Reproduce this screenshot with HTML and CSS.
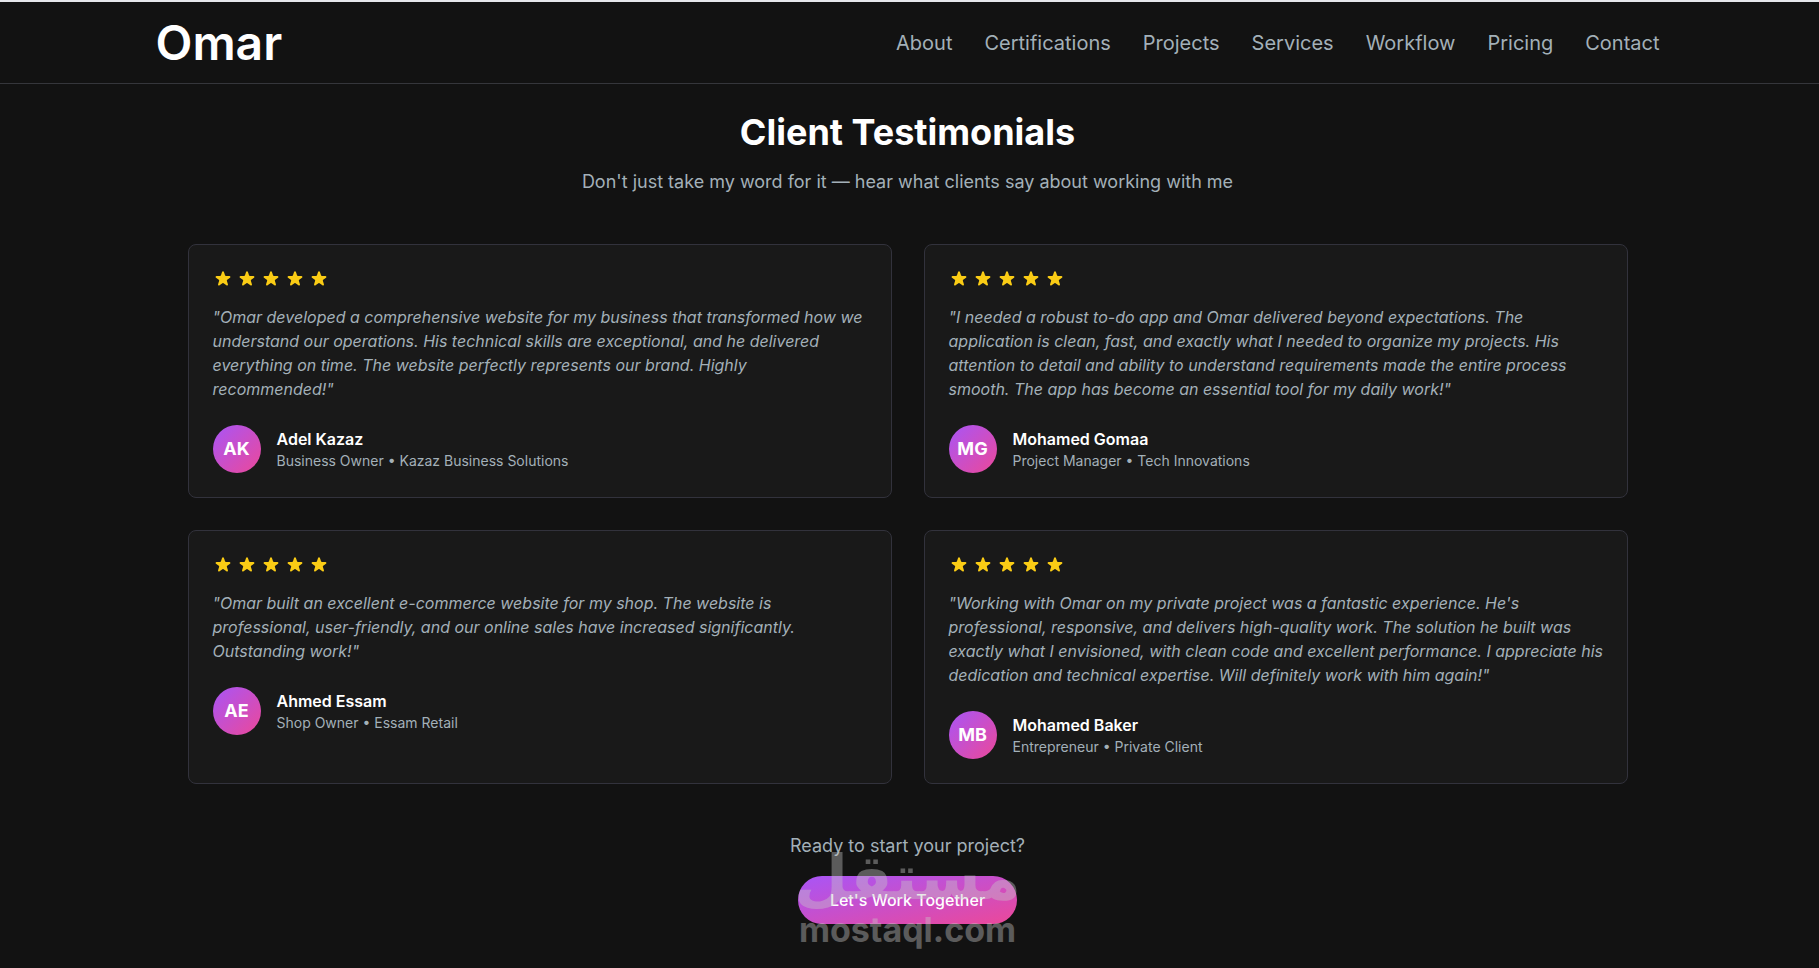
FILE: index.html
```html
<!DOCTYPE html>
<html lang="en">
<head>
<meta charset="utf-8">
<title>Omar</title>
<link rel="stylesheet" href="styles.css">
</head>
<body>
<svg width="0" height="0" class="sprite" aria-hidden="true">
  <symbol id="star" viewBox="0 0 20 20"><path d="M9.049 2.927c.3-.921 1.603-.921 1.902 0l1.07 3.292a1 1 0 00.95.69h3.462c.969 0 1.371 1.24.588 1.81l-2.8 2.034a1 1 0 00-.364 1.118l1.07 3.292c.3.921-.755 1.688-1.54 1.118l-2.8-2.034a1 1 0 00-1.175 0l-2.8 2.034c-.784.57-1.838-.197-1.539-1.118l1.07-3.292a1 1 0 00-.364-1.118L2.98 8.72c-.783-.57-.38-1.81.588-1.81h3.461a1 1 0 00.951-.69l1.07-3.292z"/></symbol>
  <symbol id="rating" viewBox="0 0 120 20">
    <use href="#star" x="0" y="0" width="20" height="20"/>
    <use href="#star" x="24" y="0" width="20" height="20"/>
    <use href="#star" x="48" y="0" width="20" height="20"/>
    <use href="#star" x="72" y="0" width="20" height="20"/>
    <use href="#star" x="96" y="0" width="20" height="20"/>
  </symbol>
</svg>
<header class="header">
  <div class="header-inner">
    <a class="brand" href="#">Omar</a>
    <nav class="nav">
      <a href="#about">About</a>
      <a href="#certifications">Certifications</a>
      <a href="#projects">Projects</a>
      <a href="#services">Services</a>
      <a href="#workflow">Workflow</a>
      <a href="#pricing">Pricing</a>
      <a href="#contact">Contact</a>
    </nav>
  </div>
</header>
<main class="testimonials">
  <h2 class="title">Client Testimonials</h2>
  <p class="subtitle">Don't just take my word for it — hear what clients say about working with me</p>
  <div class="cards">
    <article class="card">
      <svg class="stars" role="img" aria-label="5 stars"><use href="#rating"/></svg>
      <p class="quote">"Omar developed a comprehensive website for my business that transformed how we understand our operations. His technical skills are exceptional, and he delivered everything on time. The website perfectly represents our brand. Highly recommended!"</p>
      <div class="author">
        <div class="avatar">AK</div>
        <div><h3 class="name">Adel Kazaz</h3><p class="role">Business Owner • Kazaz Business Solutions</p></div>
      </div>
    </article>
    <article class="card">
      <svg class="stars" role="img" aria-label="5 stars"><use href="#rating"/></svg>
      <p class="quote">"I needed a robust to-do app and Omar delivered beyond expectations. The application is clean, fast, and exactly what I needed to organize my projects. His attention to detail and ability to understand requirements made the entire process smooth. The app has become an essential tool for my daily work!"</p>
      <div class="author">
        <div class="avatar">MG</div>
        <div><h3 class="name">Mohamed Gomaa</h3><p class="role">Project Manager • Tech Innovations</p></div>
      </div>
    </article>
    <article class="card">
      <svg class="stars" role="img" aria-label="5 stars"><use href="#rating"/></svg>
      <p class="quote">"Omar built an excellent e-commerce website for my shop. The website is professional, user-friendly, and our online sales have increased significantly. Outstanding work!"</p>
      <div class="author">
        <div class="avatar">AE</div>
        <div><h3 class="name">Ahmed Essam</h3><p class="role">Shop Owner • Essam Retail</p></div>
      </div>
    </article>
    <article class="card">
      <svg class="stars" role="img" aria-label="5 stars"><use href="#rating"/></svg>
      <p class="quote">"Working with Omar on my private project was a fantastic experience. He's professional, responsive, and delivers high-quality work. The solution he built was exactly what I envisioned, with clean code and excellent performance. I appreciate his dedication and technical expertise. Will definitely work with him again!"</p>
      <div class="author">
        <div class="avatar">MB</div>
        <div><h3 class="name">Mohamed Baker</h3><p class="role">Entrepreneur • Private Client</p></div>
      </div>
    </article>
  </div>
  <section class="cta">
    <p class="cta-text">Ready to start your project?</p>
    <a class="cta-button" href="#contact">Let's Work Together</a>
    <div class="watermark" aria-hidden="true">
      <span class="watermark-ar" lang="ar" dir="rtl">مستقل</span>
      <span class="watermark-en">mostaql.com</span>
    </div>
  </section>
</main>
</body>
</html>
```
FILE: styles.css
```css
* { box-sizing: border-box; }
body {
  margin: 0;
  padding-right: 4px;
  background: #121212;
  color: #a3b0b8;
  font-family: Inter, "Liberation Sans", sans-serif;
  font-size: 16px;
  line-height: 24px;
}
h2, h3, p { margin: 0; }
a { color: inherit; text-decoration: none; }
.sprite { position: absolute; }
.header {
  margin-right: -4px;
  padding-right: 4px;
  border-top: 2px solid #e5e7eb;
  border-bottom: 1px solid #35363b;
}
.header-inner {
  display: flex;
  align-items: center;
  justify-content: space-between;
  max-width: 1536px;
  margin: 0 auto;
  padding: 16px;
}
.brand {
  color: #fff;
  font-size: 48px;
  font-weight: 600;
  line-height: 49px;
}
.nav { display: flex; gap: 32px; font-size: 20px; line-height: 28px; }
.testimonials {
  max-width: 1472px;
  margin: 0 auto;
  padding: 28px 16px;
}
.title {
  color: #fff;
  font-size: 36px;
  font-weight: 700;
  line-height: 40px;
  text-align: center;
}
.subtitle {
  margin-top: 16px;
  font-size: 18px;
  line-height: 28px;
  text-align: center;
}
.cards {
  display: grid;
  grid-template-columns: 1fr 1fr;
  gap: 32px;
  margin-top: 48px;
}
.card {
  padding: 24px 20px 24px 24px;
  background: #191919;
  border: 1px solid #32323c;
  border-radius: 8px;
}
.stars { display: block; width: 120px; height: 20px; fill: #facc15; }
.quote { margin: 16px 0 24px; font-style: italic; }
.author { display: flex; align-items: center; gap: 16px; }
.avatar {
  display: flex;
  align-items: center;
  justify-content: center;
  width: 48px;
  height: 48px;
  border-radius: 50%;
  background: linear-gradient(to bottom right, #a855f7, #ec4899);
  color: #fff;
  font-size: 18px;
  font-weight: 700;
}
.name { color: #fff; font-size: 16px; font-weight: 600; line-height: 24px; }
.role { font-size: 14px; line-height: 20px; }
.cta {
  position: relative;
  display: flex;
  flex-direction: column;
  align-items: center;
  gap: 16px;
  margin-top: 48px;
}
.cta-text { font-size: 18px; line-height: 28px; }
.cta-button {
  padding: 12px 32px;
  border-radius: 24px;
  background: linear-gradient(to bottom right, #a855f7, #ec4899);
  color: #fff;
  font-weight: 500;
}
.watermark {
  position: absolute;
  top: 12px;
  left: 50%;
  display: flex;
  flex-direction: column;
  align-items: center;
  transform: translateX(-50%);
  color: #c8c8c8;
  opacity: 0.4;
  font-weight: 700;
  pointer-events: none;
}
.watermark-ar { font-family: "DejaVu Sans", sans-serif; font-size: 62px; line-height: 68px; }
.watermark-en { font-size: 34px; line-height: 36px; }
```
